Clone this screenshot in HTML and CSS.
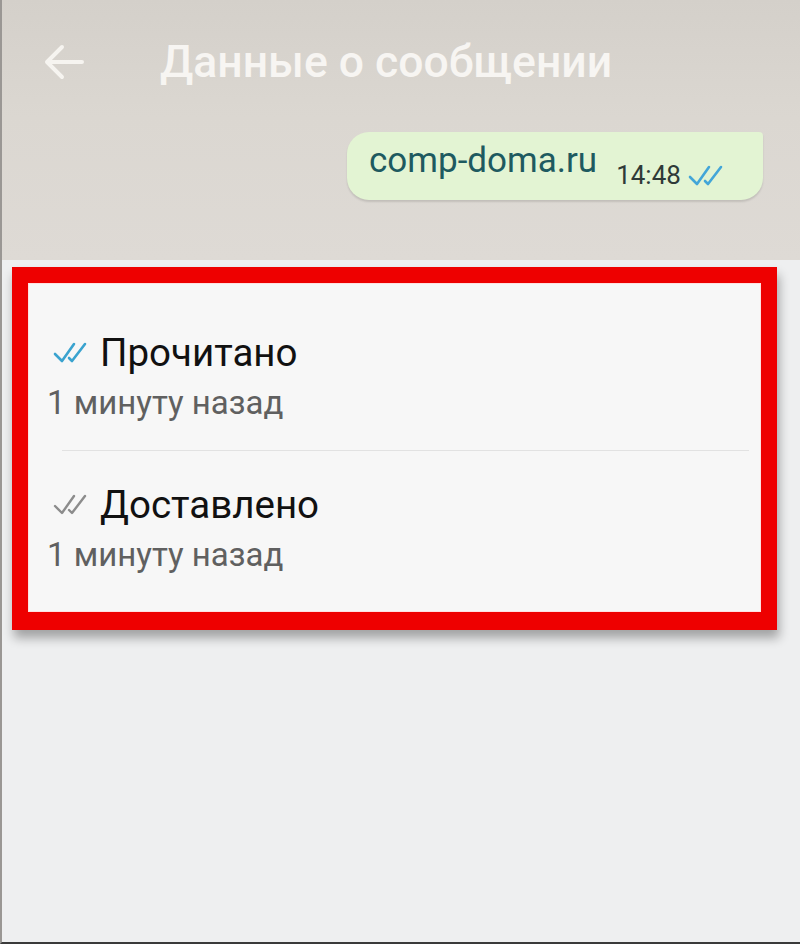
FILE: index.html
```html
<!DOCTYPE html>
<html lang="ru">
<head>
<meta charset="utf-8">
<link rel="stylesheet" href="styles.css">
</head>
<body>
<div class="screen">
  <div class="top">
    <div class="header">
      <svg class="back" width="40" height="36" viewBox="0 0 40 36">
        <path d="M38 18 H4 M18 3 L3 18 L18 33" fill="none" stroke="#f6f4f0" stroke-width="4" stroke-linecap="round" stroke-linejoin="round"/>
      </svg>
      <div class="title">Данные о сообщении</div>
    </div>
    <div class="bubble-row">
      <div class="bubble">
        <span class="msg">comp-doma.ru</span>
        <span class="meta">14:48
          <svg class="tick" width="36" height="22" viewBox="0 0 36 22">
            <path d="M2 13 L9 20 L21 3 M17 17 L20 20 L33 3" fill="none" stroke="#43a6d8" stroke-width="2.6" stroke-linecap="round" stroke-linejoin="round"/>
          </svg>
        </span>
      </div>
    </div>
  </div>
  <div class="panel">
    <div class="frame">
      <div class="row">
        <div class="row-title">
          <svg class="tick" width="36" height="22" viewBox="0 0 36 22">
            <path d="M2 12 L9 19 L21 2 M16 16 L19 19 L32 2" fill="none" stroke="#3aa3cf" stroke-width="2.6" stroke-linecap="round" stroke-linejoin="round"/>
          </svg>
          <span>Прочитано</span>
        </div>
        <div class="row-sub">1 минуту назад</div>
      </div>
      <div class="divider"></div>
      <div class="row second">
        <div class="row-title">
          <svg class="tick" width="36" height="22" viewBox="0 0 36 22">
            <path d="M2 12 L9 19 L21 2 M16 16 L19 19 L32 2" fill="none" stroke="#8c8c8c" stroke-width="2.4" stroke-linecap="round" stroke-linejoin="round"/>
          </svg>
          <span>Доставлено</span>
        </div>
        <div class="row-sub">1 минуту назад</div>
      </div>
    </div>
  </div>
</div>
</body>
</html>
```

FILE: styles.css
```css
html, body {
  margin: 0;
  padding: 0;
}
body {
  width: 800px;
  height: 944px;
  overflow: hidden;
  font-family: Roboto, "Noto Sans", "Liberation Sans", sans-serif;
  background: #eeeff0;
}
.screen {
  width: 800px;
  height: 944px;
  display: flex;
  flex-direction: column;
  box-sizing: border-box;
  border-left: 2px solid #9a9794;
  border-bottom: 2px solid #3a3a3a;
}
.top {
  height: 260px;
  background: linear-gradient(180deg, #d4d0ca 0%, #dbd7d1 45%, #dedad5 100%);
  display: flex;
  flex-direction: column;
}
.header {
  display: flex;
  align-items: center;
  height: 124px;
  padding-left: 42px;
}
.back {
  display: block;
}
.title {
  margin-left: 76px;
  font-size: 44.5px;
  font-weight: 500;
  color: #f7f5f2;
}
.bubble-row {
  display: flex;
  justify-content: flex-end;
  padding-right: 37px;
  margin-top: 8px;
}
.bubble {
  width: 416px;
  height: 68px;
  box-sizing: border-box;
  background: #e3f4d3;
  border-radius: 22px 4px 22px 22px;
  box-shadow: 0 2px 2px rgba(0,0,0,0.12);
  display: flex;
  align-items: flex-start;
  padding: 9px 0 0 22px;
}
.msg {
  font-size: 35px;
  color: #1e5a60;
  line-height: 40px;
}
.meta {
  display: flex;
  align-items: center;
  margin-left: 19px;
  margin-top: 20px;
  font-size: 26px;
  color: #2f3a38;
  line-height: 28px;
}
.meta .tick {
  margin-left: 7px;
}
.panel {
  flex: 1;
  background: #eeeff0;
  padding: 7px 0 0 10px;
}
.frame {
  width: 765px;
  height: 363px;
  box-sizing: border-box;
  border: 16px solid #ee0000;
  border-bottom-width: 18px;
  background: #f7f7f7;
  box-shadow: 2px 8px 10px rgba(0,0,0,0.32), inset 0 0 0 1px #ffe0e0;
  padding-top: 48px;
}
.row {
  padding-left: 19px;
}
.row.second {
  padding-top: 32px;
}
.row-title {
  display: flex;
  align-items: center;
  font-size: 38.5px;
  color: #111;
  line-height: 44px;
}
.row-title .tick {
  margin-left: 6px;
  margin-right: 11px;
}
.row-sub {
  margin-top: 8px;
  font-size: 33px;
  color: #606060;
  line-height: 40px;
}
.divider {
  height: 1px;
  background: #e2e2e2;
  margin: 27px 12px 0 34px;
}
```
